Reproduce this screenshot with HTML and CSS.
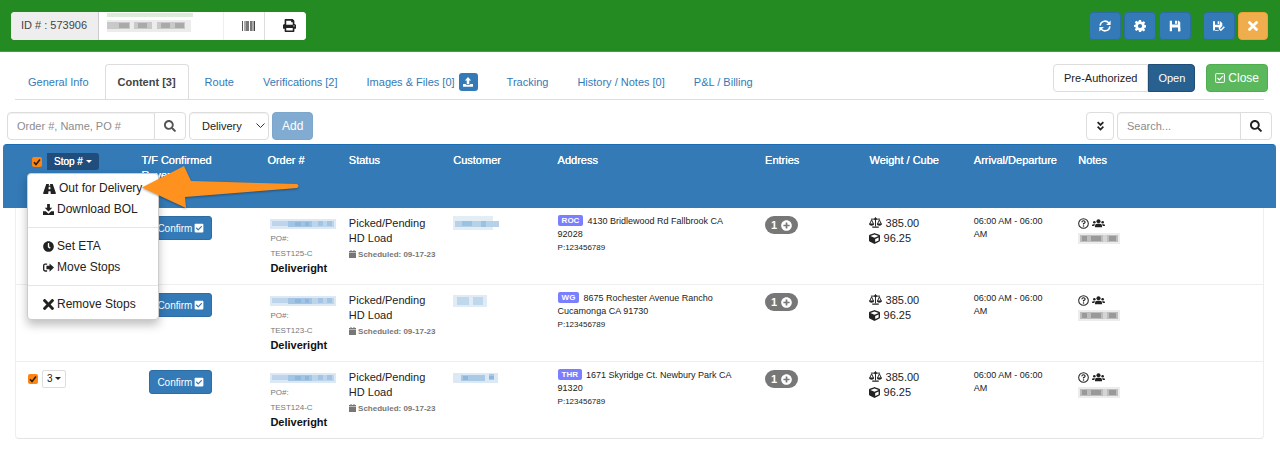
FILE: index.html
```html
<!DOCTYPE html>
<html lang="en">
<head>
<meta charset="utf-8">
<title>Manifest 573906</title>
<link rel="stylesheet" href="styles.css">
</head>
<body>
<svg class="sprite" aria-hidden="true">
  <symbol id="search" viewBox="0 0 512 512"><path d="M505 442.7L405.3 343c-4.5-4.5-10.6-7-17-7H372c27.6-35.3 44-79.7 44-128C416 93.1 322.9 0 208 0S0 93.1 0 208s93.1 208 208 208c48.3 0 92.7-16.4 128-44v16.3c0 6.4 2.5 12.5 7 17l99.7 99.7c9.4 9.4 24.6 9.4 33.9 0l28.3-28.3c9.4-9.4 9.4-24.6.1-34zM208 336c-70.7 0-128-57.2-128-128 0-70.7 57.2-128 128-128 70.7 0 128 57.2 128 128 0 70.7-57.2 128-128 128z"/></symbol>
  <symbol id="cube" viewBox="0 0 512 512"><path d="M239.1 6.3l-208 78c-18.7 7-31.1 25-31.1 45v225.1c0 18.2 10.3 34.8 26.5 42.9l208 104c13.5 6.8 29.4 6.8 42.9 0l208-104c16.3-8.1 26.5-24.8 26.5-42.9V129.3c0-20-12.4-37.9-31.1-44.9l-208-78C262 2.2 250 2.2 239.1 6.3zM256 68.4l192 72v1.1l-192 78-192-78v-1.1l192-72zm32 356V275.5l160-65v133.9l-160 80z"/></symbol>
  <symbol id="check-square" viewBox="0 0 448 512"><path d="M400 480H48c-26.51 0-48-21.49-48-48V80c0-26.51 21.49-48 48-48h352c26.51 0 48 21.49 48 48v352c0 26.51-21.49 48-48 48zm-204.686-98.059l184-184c6.248-6.248 6.248-16.379 0-22.627l-22.627-22.627c-6.248-6.248-16.379-6.249-22.628 0L184 302.745l-70.059-70.059c-6.248-6.248-16.379-6.248-22.628 0l-22.627 22.627c-6.248 6.248-6.248 16.379 0 22.627l104 104c6.249 6.25 16.379 6.25 22.628.001z"/></symbol>
  <symbol id="clock" viewBox="0 0 512 512"><path d="M256,8C119,8,8,119,8,256S119,504,256,504,504,393,504,256,393,8,256,8Zm92.49,313h0l-20,25a16,16,0,0,1-22.49,2.5h0l-67-49.72a40,40,0,0,1-15-31.23V112a16,16,0,0,1,16-16h32a16,16,0,0,1,16,16V256l58,42.5A16,16,0,0,1,348.49,321Z"/></symbol>
  <symbol id="plus-circle" viewBox="0 0 512 512"><path d="M256 8C119 8 8 119 8 256s111 248 248 248 248-111 248-248S393 8 256 8zm144 276c0 6.600-5.400 12-12 12h-92v92c0 6.600-5.400 12-12 12h-56c-6.600 0-12-5.400-12-12v-92h-92c-6.600 0-12-5.400-12-12v-56c0-6.600 5.400-12 12-12h92v-92c0-6.600 5.400-12 12-12h56c6.600 0 12 5.400 12 12v92h92c6.600 0 12 5.400 12 12v56z"/></symbol>
  <symbol id="times" viewBox="0 80 352 352"><path d="M242.720 256l100.070-100.070c12.280-12.280 12.280-32.190 0-44.480l-22.240-22.240c-12.280-12.280-32.190-12.280-44.480 0L176 189.280 75.930 89.210c-12.280-12.280-32.190-12.280-44.480 0L9.210 111.450c-12.280 12.280-12.280 32.190 0 44.480L109.280 256 9.210 356.070c-12.280 12.280-12.280 32.190 0 44.480l22.240 22.240c12.280 12.280 32.200 12.280 44.480 0L176 322.720l100.070 100.070c12.280 12.280 32.200 12.280 44.480 0l22.240-22.240c12.280-12.280 12.280-32.190 0-44.480L242.720 256z"/></symbol>
  <symbol id="print" viewBox="0 0 512 512"><path d="M448 192V77.250c0-8.490-3.370-16.620-9.370-22.630L393.370 9.370c-6-6-14.140-9.370-22.630-9.370H96C78.330 0 64 14.330 64 32v160c-35.350 0-64 28.650-64 64v112c0 8.840 7.160 16 16 16h48v96c0 17.670 14.330 32 32 32h320c17.670 0 32-14.330 32-32v-96h48c8.840 0 16-7.160 16-16V256c0-35.350-28.650-64-64-64zm-64 256H128v-96h256v96zm0-224H128V64h192v48c0 8.840 7.160 16 16 16h48v96zm48 72c-13.250 0-24-10.750-24-24 0-13.260 10.750-24 24-24s24 10.740 24 24c0 13.250-10.750 24-24 24z"/></symbol>
  <symbol id="barcode" viewBox="0 0 13 10"><path fill="#555" d="M0 0h1v10H0z"/><path fill="#aaa" d="M2 0h2v10H2zM10 0h2v10h-2z"/><path fill="#777" d="M4 0h3v10H4zM8 0h2v10H8z"/><path fill="#444" d="M12 0h1v10h-1z"/></symbol>
  <symbol id="sync" viewBox="0 0 16 16"><g fill="none" stroke="currentColor" stroke-width="2"><path d="M1.500 7.500A6.500 6.500 0 0 1 13.200 4.200M14.500 8.500A6.500 6.500 0 0 1 2.800 11.800"/></g><path d="M15.500.8v6h-6zM.5 15.200v-6h6z"/></symbol>
  <symbol id="cog" viewBox="0 0 16 16"><path fill-rule="evenodd" d="M6.600 0h2.800l.4 2.200 1.300.6 1.900-1.300 1.900 1.900-1.300 1.900.6 1.300 2.200.4v2.800l-2.200.4-.6 1.300 1.300 1.900-1.900 1.900-1.900-1.300-1.300.6L9.400 16H6.600l-.4-2.200-1.300-.6L3 14.500l-1.900-1.900 1.300-1.900-.6-1.300L0 9.200V6.600l1.800-.4.6-1.300L1.100 3 3 1.100l1.900 1.300 1.300-.6zM8 5.200a2.800 2.800 0 1 0 0 5.600 2.800 2.800 0 0 0 0-5.600z"/></symbol>
  <symbol id="save" viewBox="0 0 16 16"><path fill-rule="evenodd" d="M1 1h3v5h8V1h1l2 2v12H1zM4 10v5h8v-5z"/><path d="M8 1h3v4H8zM12 10h3v5h-3z"/></symbol>
  <symbol id="save-check" viewBox="0 0 18 16"><path fill-rule="evenodd" d="M0 1h3v5h7V1h1l3 3v4l-4 4-2-2H3v5H0zM3 14h5l1 1H0z"/><path d="M7 1h2v4H7z"/><path fill="none" stroke="currentColor" stroke-width="2.200" d="M9 11.500l2.800 2.800L17 9"/></symbol>
  <symbol id="upload" viewBox="0 0 16 16"><path d="M8 0l5 5.500H10V11H6V5.500H3zM0 11h4.500v1.500h7V11H16v4.500H0z"/></symbol>
  <symbol id="download" viewBox="0 0 16 16"><path d="M6 0h4v5.500h3.500L8 11 2.500 5.500H6zM0 10.500h4L8 14l4-3.500h4V16H0z"/></symbol>
  <symbol id="check-open" viewBox="0 0 16 16"><g fill="none" stroke="currentColor" stroke-width="1.600"><rect x="1" y="1" width="14" height="14" rx="1"/><path stroke-width="2" d="M4 8l3 3 5.500-6"/></g></symbol>
  <symbol id="chevrons" viewBox="0 0 12 14"><path fill="none" stroke="currentColor" stroke-width="2.400" d="M2 1.500l4 4 4-4M2 8l4 4 4-4"/></symbol>
  <symbol id="road" viewBox="0 0 18 14"><path fill-rule="evenodd" d="M4.500 0h3.700L8 2.500h2L9.800 0h3.700L18 13q0 1-1 1h-6.200l-.4-4H7.600l-.4 4H1q-1 0-1-1zM7.900 4l-.3 3.500h2.800L10.100 4z"/></symbol>
  <symbol id="sign-out" viewBox="0 0 16 14"><path fill="none" stroke="currentColor" stroke-width="2" d="M6 2H3Q1 2 1 4v6q0 2 2 2h3"/><path d="M9.500 1L16 7l-6.500 6V9.500H5v-5h4.500z"/></symbol>
  <symbol id="calendar" viewBox="0 0 14 16"><path d="M3 0h2v2h4V0h2v2h3v3H0V2h3zM0 6h14v10H0z"/></symbol>
  <symbol id="scale" viewBox="0 0 20 16"><path fill="none" stroke="currentColor" stroke-width="1.500" d="M3 2.800h14M10 0v14M4 4L1 10.500h6zM16 4l-3 6.500h6z"/><path d="M0 10h8q-.5 3-4 3t-4-3zM12 10h8q-.5 3-4 3t-4-3zM5 14h10v2H5z"/><circle cx="10" cy="2.500" r="2"/></symbol>
  <symbol id="question" viewBox="0 0 16 16"><circle cx="8" cy="8" r="7" fill="none" stroke="currentColor" stroke-width="1.500"/><path fill="none" stroke="currentColor" stroke-width="1.700" d="M5.600 6.200Q5.800 4 8 4t2.300 2Q10.300 7 8 8.200v1.300"/><circle cx="8" cy="11.700" r="1.100"/></symbol>
  <symbol id="users" viewBox="0 0 20 14"><circle cx="10" cy="3.500" r="3.200"/><circle cx="3.500" cy="5" r="2"/><circle cx="16.500" cy="5" r="2"/><path d="M4.500 13v-2q0-3.500 3.500-3.500h4q3.500 0 3.500 3.500v2zM0 11V9.500Q0 8 2 8h2.500Q3.500 9.500 3.500 11zM20 11V9.500Q20 8 18 8h-2.500q1 1.500 1 3z"/></symbol>
  <symbol id="blur-order" viewBox="0 0 66 12"><path fill="#dce8f3" d="M0 1h66v10H0z"/><path fill="#bcd5ea" d="M2 3h16v5H2zM42 3h22v6H42z"/><path fill="#a3c5e3" d="M18 3h24v6H18zM48 3h5v5h-5zM57 3h5v5h-5z"/><path fill="#8fb8dc" d="M25 4h6v4h-6zM35 4h4v4h-4z"/></symbol>
  <symbol id="blur-grey" viewBox="0 0 42 12"><path fill="#ececec" d="M0 0h42v11H0z"/><path fill="#bdbdbd" d="M2 2h38v7H2z"/><path fill="#999" d="M4 3h5v5H4zM13 3h10v5H13zM31 3h7v5h-7z"/><path fill="#d5d5d5" d="M25 2h4v7h-4z"/></symbol>
</svg>

<header class="topbar">
  <div class="group">
    <span class="addon">ID # : 573906</span>
    <span class="name-box"><svg viewBox="0 0 86 20" role="img" aria-label="Hidden name"><path fill="#dcecd9" d="M0 0h86v4H0z"/><path fill="#ececec" d="M0 7h84v12H0z"/><path fill="#c9c9c9" d="M0 9h23v7H0zM27 9h18v7H27zM50 9h28v7H50z"/><path fill="#aaa" d="M12 10h10v5H12zM31 10h9v5h-9zM54 10h9v5h-9zM68 10h9v5h-9z"/></svg></span>
    <button class="seg" aria-label="Barcode"><svg class="i-barcode"><use href="#barcode"/></svg></button>
    <button class="seg" aria-label="Print"><svg class="i14"><use href="#print"/></svg></button>
  </div>
  <div class="actions">
    <button class="btn primary square" aria-label="Refresh"><svg class="i12"><use href="#sync"/></svg></button>
    <button class="btn primary square" aria-label="Settings"><svg class="i12"><use href="#cog"/></svg></button>
    <button class="btn primary square" aria-label="Save"><svg class="i12"><use href="#save"/></svg></button>
    <button class="btn primary square apart" aria-label="Save and close"><svg class="i12"><use href="#save-check"/></svg></button>
    <button class="btn warning" aria-label="Cancel"><svg class="i10"><use href="#times"/></svg></button>
  </div>
</header>

<div class="nav-row">
  <nav class="tabs">
    <a href="#general">General Info</a>
    <a href="#content" class="active">Content [3]</a>
    <a href="#route">Route</a>
    <a href="#verifications">Verifications [2]</a>
    <a href="#images">Images &amp; Files [0] <span class="upload"><svg class="i10"><use href="#upload"/></svg></span></a>
    <a href="#tracking">Tracking</a>
    <a href="#history">History / Notes [0]</a>
    <a href="#billing">P&amp;L / Billing</a>
  </nav>
  <div class="status-buttons">
    <div class="group">
      <button class="btn plain">Pre-Authorized</button>
      <button class="btn dark">Open</button>
    </div>
    <button class="btn success"><svg class="i10"><use href="#check-open"/></svg> Close</button>
  </div>
</div>

<div class="toolbar">
  <div class="group">
    <input class="field order" type="text" placeholder="Order #, Name, PO #" aria-label="Order #, Name, PO #">
    <button class="btn plain find grey" aria-label="Find order"><svg class="i12"><use href="#search"/></svg></button>
  </div>
  <select class="field kind" aria-label="Stop type"><option>Delivery</option></select>
  <button class="btn primary add" disabled>Add</button>
  <button class="btn plain expand" aria-label="Expand all"><svg class="i-chev"><use href="#chevrons"/></svg></button>
  <div class="group">
    <input class="field query" type="search" placeholder="Search..." aria-label="Search">
    <button class="btn plain find" aria-label="Search"><svg class="i12"><use href="#search"/></svg></button>
  </div>
</div>

<main>
<table class="stops">
  <colgroup>
    <col class="c-gutter"><col class="c-stop"><col class="c-confirm"><col class="c-order"><col class="c-unit"><col class="c-unit"><col class="c-address"><col class="c-unit"><col class="c-unit"><col class="c-unit"><col class="c-notes"><col class="c-gutter">
  </colgroup>
  <thead>
    <tr>
      <td></td>
      <th>
        <div class="stop-head">
          <input type="checkbox" class="tick" checked aria-label="Select all stops">
          <button class="stop-btn" aria-haspopup="true" aria-expanded="true">Stop # <span class="caret"></span></button>
          <ul class="menu">
            <li><button><svg class="i-road"><use href="#road"/></svg> Out for Delivery</button></li>
            <li><button><svg class="i11"><use href="#download"/></svg> Download BOL</button></li>
            <li class="split"><button><svg class="i11"><use href="#clock"/></svg> Set ETA</button></li>
            <li><button><svg class="i11"><use href="#sign-out"/></svg> Move Stops</button></li>
            <li class="split"><button><svg class="i11"><use href="#times"/></svg> Remove Stops</button></li>
          </ul>
          <svg class="arrow" viewBox="0 0 158 48" aria-hidden="true"><path d="M0 23.500L42 2L49 17L155 20Q158 22 155 24L43 33L44 44z"/></svg>
        </div>
      </th>
      <th>T/F Confirmed<br>Revenue<span class="rule"></span></th>
      <th>Order #</th>
      <th>Status</th>
      <th>Customer</th>
      <th>Address</th>
      <th>Entries</th>
      <th>Weight / Cube</th>
      <th>Arrival/Departure</th>
      <th>Notes</th>
      <td></td>
    </tr>
  </thead>
  <tbody>
    <tr>
      <td></td>
      <td class="stop"><input type="checkbox" class="tick" checked aria-label="Select stop 1"> <button class="num">1 <span class="caret"></span></button></td>
      <td class="confirm"><button class="btn primary small">Confirm <svg class="i10"><use href="#check-square"/></svg></button></td>
      <td class="order"><svg class="blur-order" role="img" aria-label="Hidden order number"><use href="#blur-order"/></svg><small>PO#:</small><small>TEST125-C</small><b>Deliveright</b></td>
      <td>Picked/Pending<br>HD Load<br><span class="sched"><svg class="i8"><use href="#calendar"/></svg> Scheduled: 09-17-23</span></td>
      <td class="customer"><svg viewBox="0 0 46 14" role="img" aria-label="Hidden customer"><path fill="#e3edf6" d="M0 0h40v14H0z"/><path fill="#b6d1e8" d="M2 5h44v6H2z"/><path fill="#9dc1e0" d="M9 5h10v5H9zM28 5h5v6h-5z"/></svg></td>
      <td class="address"><span class="tag">ROC</span>4130 Bridlewood Rd Fallbrook CA 92028<span class="phone">P:123456789</span></td>
      <td><span class="badge">1 <svg class="i11"><use href="#plus-circle"/></svg></span></td>
      <td><svg class="i-scale"><use href="#scale"/></svg> 385.00<br><svg class="i11"><use href="#cube"/></svg> 96.25</td>
      <td class="time">06:00 AM - 06:00 AM</td>
      <td class="notes"><svg class="i11"><use href="#question"/></svg> <svg class="i-users"><use href="#users"/></svg><svg class="blur-grey" role="img" aria-label="Hidden amount"><use href="#blur-grey"/></svg></td>
      <td></td>
    </tr>
    <tr>
      <td></td>
      <td class="stop"><input type="checkbox" class="tick" checked aria-label="Select stop 2"> <button class="num">2 <span class="caret"></span></button></td>
      <td class="confirm"><button class="btn primary small">Confirm <svg class="i10"><use href="#check-square"/></svg></button></td>
      <td class="order"><svg class="blur-order" role="img" aria-label="Hidden order number"><use href="#blur-order"/></svg><small>PO#:</small><small>TEST123-C</small><b>Deliveright</b></td>
      <td>Picked/Pending<br>HD Load<br><span class="sched"><svg class="i8"><use href="#calendar"/></svg> Scheduled: 09-17-23</span></td>
      <td class="customer"><svg viewBox="0 0 46 14" role="img" aria-label="Hidden customer"><path fill="#e0ebf5" d="M0 2h34v12H0z"/><path fill="#bfd8ec" d="M4 4h12v8H4zM20 4h10v8H20z"/></svg></td>
      <td class="address"><span class="tag">WG</span>8675 Rochester Avenue Rancho Cucamonga CA 91730<span class="phone">P:123456789</span></td>
      <td><span class="badge">1 <svg class="i11"><use href="#plus-circle"/></svg></span></td>
      <td><svg class="i-scale"><use href="#scale"/></svg> 385.00<br><svg class="i11"><use href="#cube"/></svg> 96.25</td>
      <td class="time">06:00 AM - 06:00 AM</td>
      <td class="notes"><svg class="i11"><use href="#question"/></svg> <svg class="i-users"><use href="#users"/></svg><svg class="blur-grey" role="img" aria-label="Hidden amount"><use href="#blur-grey"/></svg></td>
      <td></td>
    </tr>
    <tr>
      <td></td>
      <td class="stop"><input type="checkbox" class="tick" checked aria-label="Select stop 3"> <button class="num">3 <span class="caret"></span></button></td>
      <td class="confirm"><button class="btn primary small">Confirm <svg class="i10"><use href="#check-square"/></svg></button></td>
      <td class="order"><svg class="blur-order" role="img" aria-label="Hidden order number"><use href="#blur-order"/></svg><small>PO#:</small><small>TEST124-C</small><b>Deliveright</b></td>
      <td>Picked/Pending<br>HD Load<br><span class="sched"><svg class="i8"><use href="#calendar"/></svg> Scheduled: 09-17-23</span></td>
      <td class="customer"><svg viewBox="0 0 46 14" role="img" aria-label="Hidden customer"><path fill="#dce9f4" d="M0 3h45v10H0z"/><path fill="#a9c9e5" d="M8 5h24v6H8zM36 4h5v6h-5z"/><path fill="#8db7dc" d="M10 6h5v4h-5zM36 6h5v3h-5z"/></svg></td>
      <td class="address"><span class="tag">THR</span>1671 Skyridge Ct. Newbury Park CA 91320<span class="phone">P:123456789</span></td>
      <td><span class="badge">1 <svg class="i11"><use href="#plus-circle"/></svg></span></td>
      <td><svg class="i-scale"><use href="#scale"/></svg> 385.00<br><svg class="i11"><use href="#cube"/></svg> 96.25</td>
      <td class="time">06:00 AM - 06:00 AM</td>
      <td class="notes"><svg class="i11"><use href="#question"/></svg> <svg class="i-users"><use href="#users"/></svg><svg class="blur-grey" role="img" aria-label="Hidden amount"><use href="#blur-grey"/></svg></td>
      <td></td>
    </tr>
  </tbody>
</table>
</main>
</body>
</html>
```

FILE: styles.css
```css
* { box-sizing: border-box; }

body {
  margin: 0;
  background: #fff;
  color: #222;
  font: 11px/15px "Liberation Sans", Arial, sans-serif;
}

button, input, select { font: inherit; color: inherit; margin: 0; }
button { cursor: pointer; }
svg { fill: currentColor; vertical-align: -1px; }
.sprite { position: absolute; width: 0; height: 0; }

.i8 { width: 7px; height: 8px; }
.i10 { width: 10px; height: 10px; }
.i11 { width: 11px; height: 11px; vertical-align: -2px; }
.i12 { width: 12px; height: 12px; }
.i14 { width: 13px; height: 13px; }
.i-barcode { width: 13px; height: 10px; }
.i-chev { width: 9px; height: 10px; }
.i-road { width: 13px; height: 10px; }
.i-scale { width: 13px; height: 11px; }
.i-users { width: 13px; height: 9px; }

.caret {
  display: inline-block;
  border: 3px solid transparent;
  border-top-color: currentColor;
  border-bottom: 0;
  vertical-align: 2px;
}

/* Buttons and fields */
.group { display: flex; }
.btn {
  display: inline-flex;
  align-items: center;
  justify-content: center;
  gap: 3px;
  height: 28px;
  padding: 0 9px;
  border: 1px solid transparent;
  border-radius: 4px;
  color: #fff;
  white-space: nowrap;
}
.primary { background: #337ab7; border-color: #2e6da4; }
.primary:disabled { background: #82abd1; border-color: #7da6cd; }
.warning { background: #f0ad4e; border-color: #eea236; }
.success { padding: 0 8px; background: #5cb85c; border-color: #4cae4c; font-size: 12px; }
.plain { padding: 0 10px; background: #fff; border-color: #ddd; color: #222; }
.dark { background: #286090; border-color: #204d74; }
.add { font-size: 12px; }
.small { gap: 2px; height: 24px; padding: 0 7px; border-radius: 3px; font-size: 10px; }
.square { width: 32px; padding: 0; }
.grey { color: #555; }
.group > :not(:first-child) { border-top-left-radius: 0; border-bottom-left-radius: 0; }
.group > :not(:last-child) { border-top-right-radius: 0; border-bottom-right-radius: 0; }

.field {
  height: 28px;
  padding: 0 9px;
  border: 1px solid #ddd;
  border-radius: 4px;
  background: #fff;
  box-shadow: inset 0 1px 1px rgba(0, 0, 0, .06);
}
.field::placeholder { color: #8c8c8c; opacity: 1; }

/* Top bar */
.topbar {
  display: flex;
  align-items: center;
  justify-content: space-between;
  height: 52px;
  padding: 0 12px 0 11px;
  border-bottom: 1px solid #4c9a45;
  background: #248b22;
}
.topbar .group { height: 28px; border-radius: 4px; background: #fff; overflow: hidden; }
.addon {
  display: flex;
  align-items: center;
  padding: 0 11px 0 10px;
  border-right: 1px solid #ccc;
  background: #eee;
  color: #444;
}
.name-box { width: 125px; padding: 1px 8px; border-right: 1px solid #eee; }
.name-box svg { display: block; width: 86px; height: 20px; }
.seg {
  display: flex;
  align-items: center;
  justify-content: center;
  width: 41px;
  padding: 0 0 0 8px;
  border: 0;
  border-right: 1px solid #ddd;
  background: #fff;
}
.seg:last-child { border-right: 0; }
.actions { display: flex; gap: 3px; }
.apart { margin-left: 9px; }

/* Tabs */
.nav-row {
  display: flex;
  justify-content: space-between;
  margin: 12px 16px 0 15px;
  border-bottom: 1px solid #ddd;
}
.tabs { display: flex; gap: 3px; }
.tabs a {
  display: flex;
  align-items: center;
  gap: 4px;
  height: 35px;
  padding: 0 12px;
  border: 1px solid transparent;
  border-bottom: 0;
  border-radius: 4px 4px 0 0;
  color: #337ab7;
  text-decoration: none;
  white-space: nowrap;
}
.tabs .active { border-color: #ddd; color: #444; font-weight: bold; }
.upload {
  display: flex;
  align-items: center;
  justify-content: center;
  width: 19px;
  height: 18px;
  border-radius: 3px;
  background: #337ab7;
  color: #fff;
}
.status-buttons { display: flex; gap: 11px; margin-right: -4px; }

/* Toolbar */
.toolbar { display: flex; gap: 3px; padding: 12px 8px 4px 7px; }
.order.field { width: 148px; }
.find { width: 32px; margin-left: -1px; padding: 0; }
.kind {
  width: 80px;
  padding: 0 12px;
  appearance: none;
  background: #fff url("data:image/svg+xml,%3Csvg xmlns='http://www.w3.org/2000/svg' width='9' height='6'%3E%3Cpath d='M.5.5l4 4 4-4' fill='none' stroke='%23333'/%3E%3C/svg%3E") no-repeat right 3px center;
}
.expand { width: 28px; margin-left: auto; padding: 0; }
.query { width: 124px; }

/* Stops table */
main { padding: 0 4px 28px 3px; }
.stops { width: 100%; table-layout: fixed; border-collapse: separate; border-spacing: 0; }
.c-gutter { width: 12px; }
.c-stop { width: 9.3%; }
.c-confirm { width: 9.9%; }
.c-order { width: 6.4%; }
.c-unit { width: 8.2%; }
.c-address { width: 16.3%; }

th, td { padding: 8px 8px 0; text-align: left; vertical-align: top; }
thead th, thead td { height: 64px; background: #337ab7; border-top: 1px solid #1a6cb5; }
thead td:first-child { border-top-left-radius: 4px; }
thead td:last-child { border-top-right-radius: 4px; }
th { color: #fff; font-weight: normal; text-shadow: 0 0 0 #fff; white-space: nowrap; }
.rule { display: block; width: 40px; margin: 8px 0 0 11px; border-bottom: 1px solid #5b5fc0; }

tbody td { height: 77px; border-bottom: 1px solid #eee; }
tbody td:first-child, tbody td:last-child { padding: 0; border-bottom: 0; }
tbody td:nth-child(2) { border-left: 1px solid #eee; }
tbody td:nth-child(11) { border-right: 1px solid #eee; }
tbody tr:last-child td:not(:first-child):not(:last-child) { border-bottom-color: #e4e4e4; }
tbody tr:last-child td:nth-child(2) { border-bottom-left-radius: 4px; }
tbody tr:last-child td:nth-child(11) { border-bottom-right-radius: 4px; }

.tick {
  appearance: none;
  width: 10px;
  height: 10px;
  border-radius: 2px;
  background: #ff8411 url("data:image/svg+xml,%3Csvg xmlns='http://www.w3.org/2000/svg' viewBox='0 0 10 10'%3E%3Cpath d='M2 5.200l2 2.300L8 2.500' fill='none' stroke='%23222' stroke-width='1.600'/%3E%3C/svg%3E");
  flex: none;
}

.stop-head { position: relative; display: flex; align-items: center; gap: 5px; padding-left: 9px; }
.stop-btn {
  height: 17px;
  padding: 0 7px;
  border: 0;
  border-radius: 0 3px 3px 0;
  background: #204d7c;
  font-size: 10px;
  line-height: 17px;
  text-shadow: inherit;
}
.menu {
  position: absolute;
  z-index: 1;
  top: 20px;
  left: 4px;
  width: 132px;
  margin: 0;
  padding: 4px 0;
  border: 1px solid #ccc;
  border-radius: 4px;
  background: #fff;
  box-shadow: 0 5px 10px rgba(0, 0, 0, .25);
  color: #222;
  list-style: none;
  text-shadow: none;
}
.menu button {
  display: flex;
  align-items: center;
  gap: 3px;
  width: 100%;
  height: 21px;
  padding: 0 0 0 15px;
  border: 0;
  background: none;
  font-size: 12px;
}
.menu .split { margin-top: 7px; padding-top: 8px; border-top: 1px solid #e5e5e5; }
.arrow {
  position: absolute;
  z-index: 2;
  top: 11px;
  left: 119px;
  width: 158px;
  height: 48px;
  fill: #ff921e;
  filter: drop-shadow(0 1px 1px rgba(0, 0, 0, .35));
}

td.stop { display: flex; align-items: flex-start; gap: 4px; padding: 8px 0 0 12px; }
td.stop .tick { margin-top: 4px; }
.num {
  height: 18px;
  padding: 0 4px;
  border: 1px solid #ddd;
  border-radius: 2px;
  background: #fff;
  font-size: 10px;
  line-height: 16px;
}
td.confirm { padding-left: 16px; }
td.order { padding: 8px 0 0 11px; white-space: nowrap; }
td.order > * { display: block; }
td.order small { color: #777; font-size: 8px; }
td.order b { color: #111; }
.blur-order { width: 66px; height: 12px; margin: 2px 0 1px; }
.sched { color: #777; font-size: 8px; font-weight: bold; white-space: nowrap; }
td.customer svg { display: block; width: 46px; height: 14px; }
td.address { padding: 7px 24px 0 8px; font-size: 9px; line-height: 13px; }
.tag {
  display: inline-block;
  height: 11px;
  margin-right: 4px;
  padding: 0 4px;
  border-radius: 2px;
  background: #7a7eff;
  color: #fff;
  font-size: 8px;
  font-weight: bold;
  line-height: 11px;
  vertical-align: top;
}
.phone { display: block; font-size: 8px; }
.badge {
  display: inline-flex;
  align-items: center;
  gap: 4px;
  height: 18px;
  padding: 0 6px;
  border-radius: 9px;
  background: #777;
  color: #fff;
  font-weight: bold;
}
td.time { padding: 7px 16px 0 8px; font-size: 9px; line-height: 13px; }
.blur-grey { display: block; width: 42px; height: 12px; margin-top: 2px; }
```
